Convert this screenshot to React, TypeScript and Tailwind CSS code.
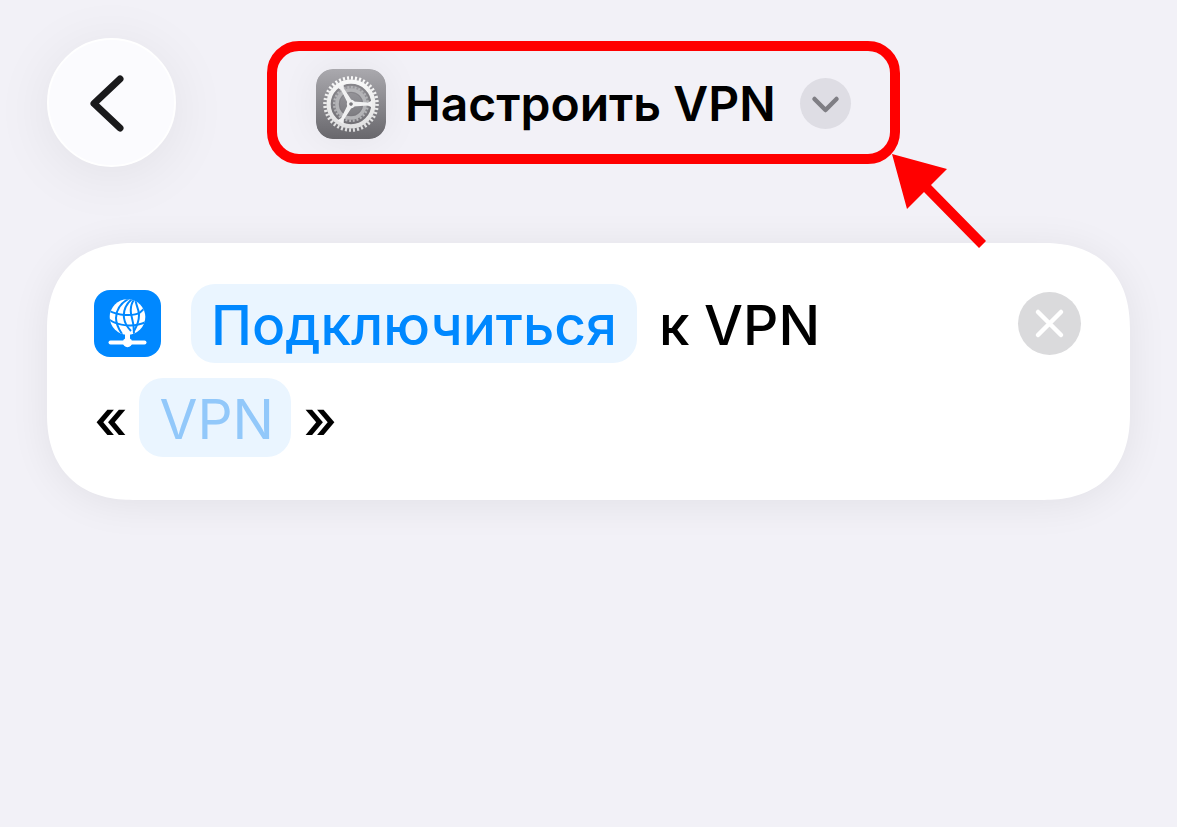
import { clsx } from 'clsx';

const SPOKES = [0, 120, 240];

function SettingsIcon({ className }: { className?: string }) {
  return (
    <svg viewBox="0 0 70 70" className={clsx('shrink-0', className)} aria-hidden="true">
      <defs>
        <linearGradient id="tile" x1="0" y1="0" x2="0" y2="1">
          <stop offset="0" stopColor="#aaa9ae" />
          <stop offset="1" stopColor="#68676c" />
        </linearGradient>
        <linearGradient id="steel" gradientUnits="userSpaceOnUse" x1="0" y1="-28" x2="0" y2="28">
          <stop offset="0" stopColor="#fbfbfb" />
          <stop offset="1" stopColor="#dededf" />
        </linearGradient>
      </defs>
      <rect width="70" height="70" rx="17" fill="url(#tile)" />
      <g transform="translate(35 35)" fill="none">
        <circle r="19.5" stroke="#6e6d72" strokeWidth="2.6" opacity="0.45" />
        {/* small cog behind */}
        <circle r="14" stroke="#b4b4b7" strokeWidth="3.6" />
        <circle r="16.8" stroke="#b4b4b7" strokeWidth="2.4" pathLength="56" strokeDasharray="1 1" />
        <circle r="11.6" stroke="#77767b" strokeWidth="1" opacity="0.5" />
        {/* big cog */}
        <circle r="22.4" stroke="url(#steel)" strokeWidth="4.2" />
        <circle r="26" stroke="url(#steel)" strokeWidth="3.6" pathLength="80" strokeDasharray="1 1" />
        {SPOKES.map((angle) => (
          <path key={angle} d="M2 -2.4 L17 -1.6 L21 -3.6 V3.6 L17 1.6 L2 2.4 Z" fill="#f1f1f2" transform={`rotate(${angle})`} />
        ))}
        <circle r="3" fill="#7a797e" stroke="#f1f1f2" strokeWidth="2.4" />
      </g>
    </svg>
  );
}

function GlobeIcon({ className }: { className?: string }) {
  return (
    <svg viewBox="0 0 67 67" className={clsx('shrink-0', className)} aria-hidden="true">
      <rect width="67" height="67" rx="16" fill="#0088ff" />
      <clipPath id="globe">
        <circle cx="33.5" cy="27" r="17.8" />
      </clipPath>
      <circle cx="33.5" cy="27" r="17.8" fill="#fff" />
      <g clipPath="url(#globe)" fill="none" stroke="#0088ff" strokeWidth="2">
        <path d="M35 8.500 C27 13 22 19 22 28 C22 34 24 38 28 44" />
        <path d="M38.500 8.500 C32 14 29 20 30 28 C31 35 34 38 37 41" />
        <path d="M40.500 9 C36 15 36 20 37.500 26 C39 31 40 34 40 44" />
        <path d="M41.500 9 C41 14 45 18 45 25 C45 31 43 36 40 41" />
        <path d="M14 20 C23 26 40 26.500 46 22.500 L52 17" />
        <path d="M14 29 C24 36 40 38 52 32" />
      </g>
      <path d="M33.500 44 V51" stroke="#fff" strokeWidth="5" />
      <path d="M16.500 52.500 H50.500" stroke="#fff" strokeWidth="4" strokeLinecap="round" />
      <circle cx="33.500" cy="52.500" r="4.700" fill="#fff" />
    </svg>
  );
}

function PointerArrow() {
  return (
    <svg viewBox="0 0 98 96" className="pointer-events-none absolute top-full left-full h-[96px] w-[98px]" aria-hidden="true">
      <path d="M2 0 L57 15 L41 31 L96 87 L89 94 L34 38 L17 55 Z" fill="#ff0000" />
    </svg>
  );
}

export default function App() {
  return (
    <main className="min-h-screen bg-[#f2f1f7] px-[47px] pt-[38px] pb-10 font-['Inter',sans-serif] text-black">
      <header className="flex items-center gap-[91px]">
        <button
          type="button"
          aria-label="Назад"
          className="flex size-[129px] shrink-0 items-center justify-center rounded-full border-2 border-white bg-[#fbfbfe] shadow-[0_8px_60px_rgba(0,0,0,0.07)]"
        >
          <svg viewBox="0 0 129 129" className="size-[129px] shrink-0" fill="none" aria-hidden="true">
            <path d="M73 41 L47 65.500 L73 90" stroke="#1a1a1c" strokeWidth="7" strokeLinecap="round" strokeLinejoin="round" />
          </svg>
        </button>

        <div className="relative z-10 rounded-[32px] border-10 border-[#ff0000]">
          <button type="button" className="flex items-center px-[39px] pt-[17px] pb-[15px]">
            <SettingsIcon className="size-[70px] rounded-2xl shadow-[0_0_40px_rgba(0,0,0,0.06)]" />
            <span className="ml-[19px] text-[48px] leading-[71px] font-semibold whitespace-nowrap">Настроить VPN</span>
            <span className="ml-6 flex size-[51px] shrink-0 items-center justify-center rounded-full bg-[#dedde4]">
              <svg viewBox="0 0 51 51" className="size-[51px]" fill="none" aria-hidden="true">
                <path d="M14.500 21 L25.500 32 L36.500 21" stroke="#7f7e84" strokeWidth="4.500" strokeLinecap="round" strokeLinejoin="round" />
              </svg>
            </span>
          </button>
          <PointerArrow />
        </div>
      </header>

      <section className="mt-[76px] flex items-start justify-between rounded-[86px] bg-white pt-[41px] pr-[49px] pb-[43px] pl-[47px] shadow-[0_4px_40px_rgba(0,0,0,0.07)] [corner-shape:superellipse(1.2)]">
        <div className="flex flex-col gap-[15px] text-[55px] leading-[75px] font-medium">
          <div className="flex items-center">
            <GlobeIcon className="size-[67px]" />
            <button type="button" className="ml-[30px] rounded-3xl bg-[#eaf5ff] px-5 pt-1 text-[#0088ff]">
              Подключиться
            </button>
            <span className="ml-[22px] pt-1">к VPN</span>
          </div>
          <div className="flex items-center gap-3">
            <span className="pt-1">«</span>
            <input
              type="text"
              aria-label="VPN"
              placeholder="VPN"
              className="w-[152px] rounded-3xl bg-[#eaf5ff] px-5 pt-1 font-normal text-[#0088ff] placeholder:text-[#92c8fa]"
            />
            <span className="pt-1">»</span>
          </div>
        </div>
        <button
          type="button"
          aria-label="Удалить действие"
          className="mt-2 flex size-[63px] shrink-0 items-center justify-center rounded-full bg-[#dadadc]"
        >
          <svg viewBox="0 0 63 63" className="size-[63px]" fill="none" aria-hidden="true">
            <path d="M20 20 L43 43 M43 20 L20 43" stroke="#fff" strokeWidth="4.500" strokeLinecap="round" />
          </svg>
        </button>
      </section>
    </main>
  );
}
